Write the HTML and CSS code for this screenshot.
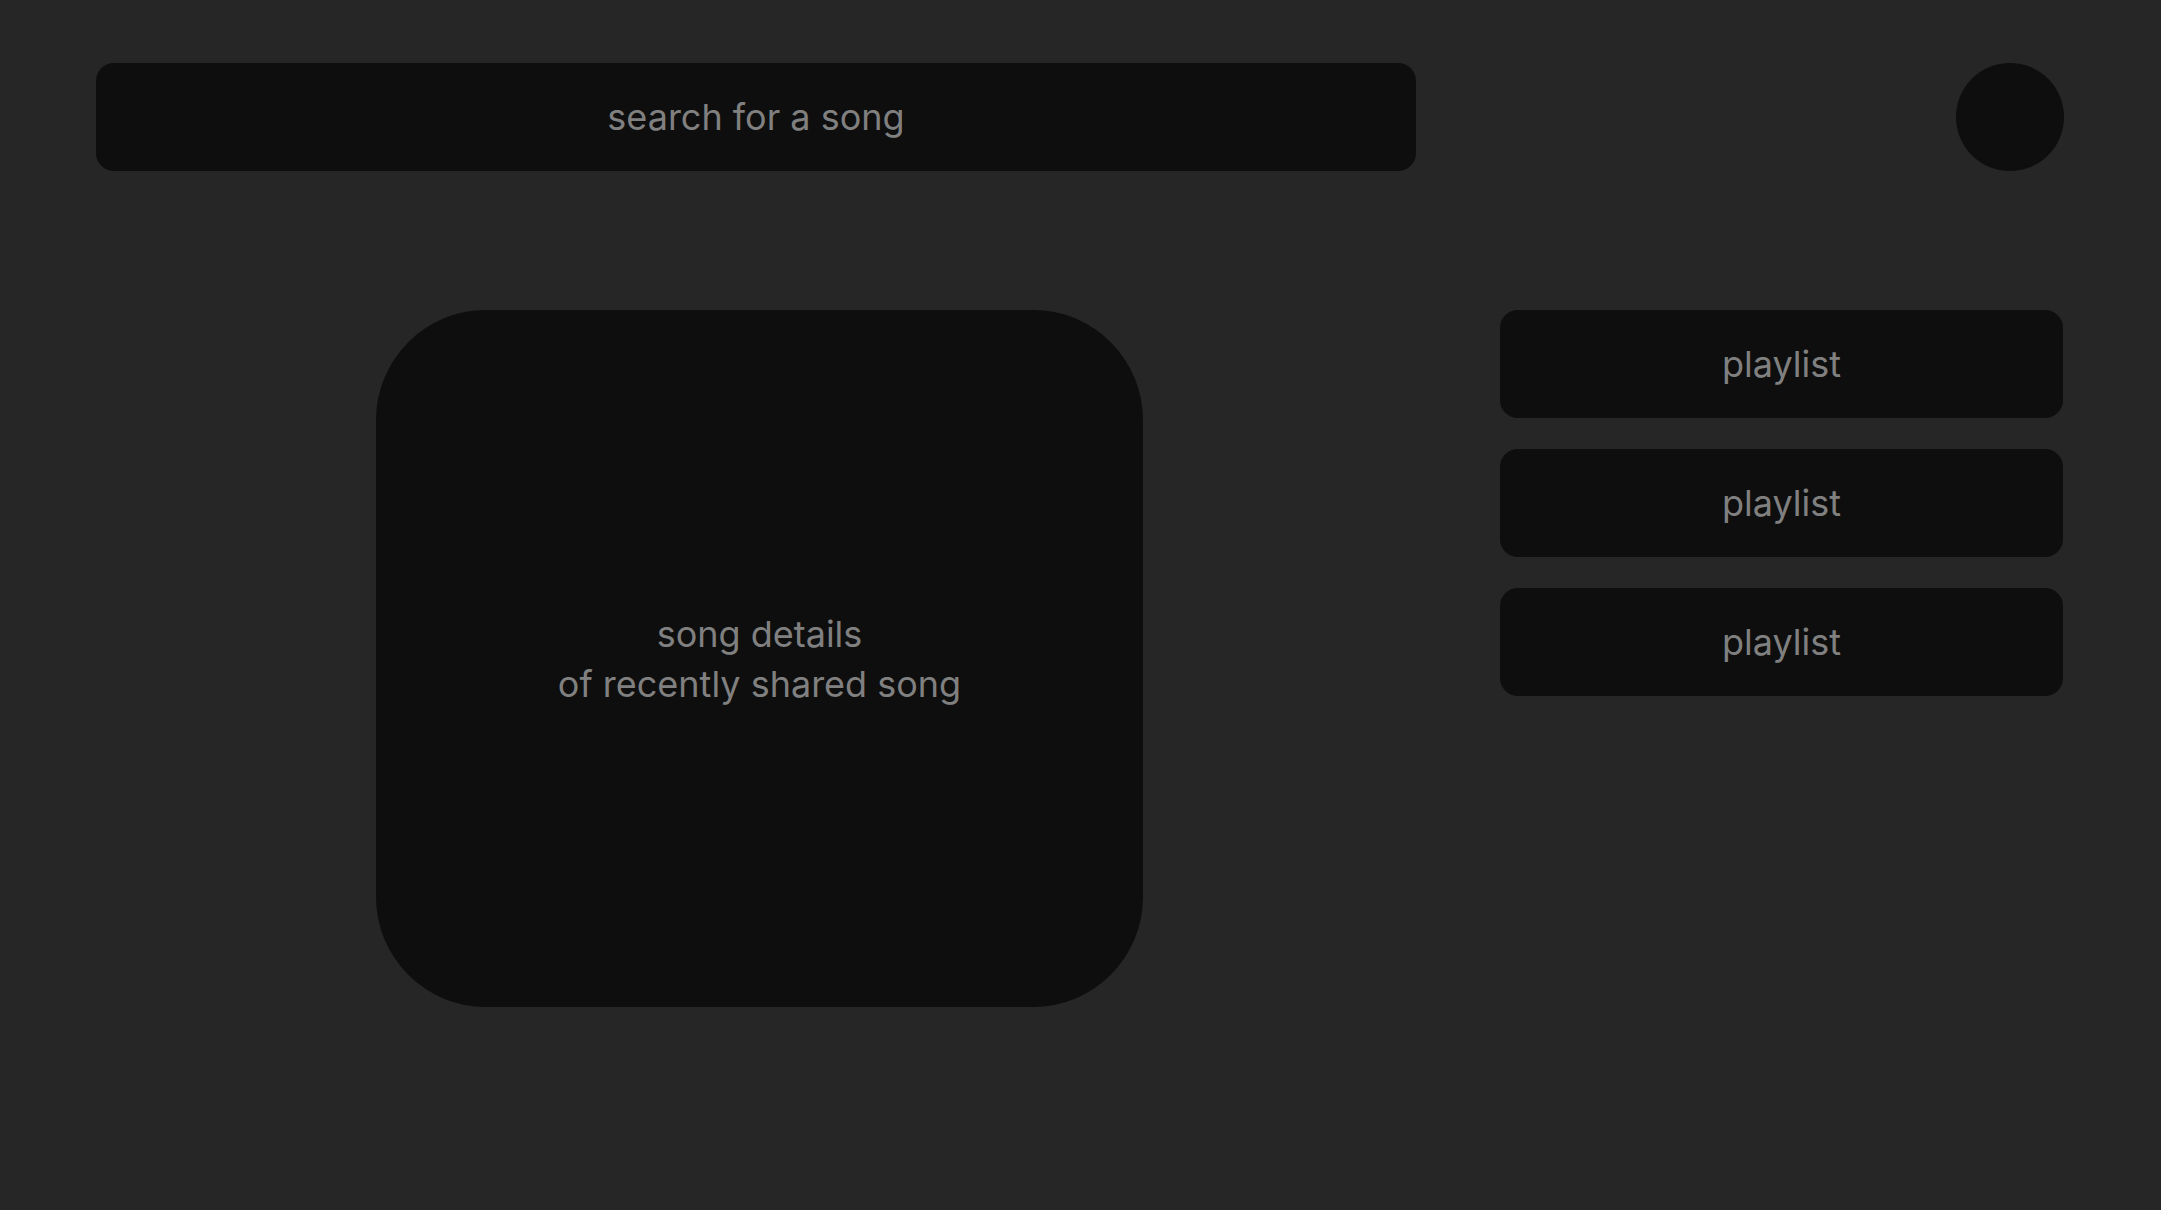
FILE: index.html
```html
<!DOCTYPE html>
<html lang="en">
<head>
<meta charset="utf-8">
<title>Songs</title>
<link rel="stylesheet" href="styles.css">
</head>
<body>
<header class="topbar">
  <div class="search">search for a song</div>
  <div class="avatar"></div>
</header>
<main class="main">
  <section class="song-card">
    <p class="song-text">song details<br>of recently shared song</p>
  </section>
  <aside class="playlists">
    <div class="playlist">playlist</div>
    <div class="playlist">playlist</div>
    <div class="playlist">playlist</div>
  </aside>
</main>
</body>
</html>
```
FILE: styles.css
```css
html, body {
  margin: 0;
  padding: 0;
}
body {
  background: #262626;
  width: 2161px;
  height: 1210px;
  font-family: Inter, "Open Sans", sans-serif;
  color: #808080;
  font-size: 36px;
}
.topbar {
  display: flex;
  justify-content: space-between;
  align-items: center;
  padding: 63px 97px 0 96px;
}
.search {
  width: 1320px;
  height: 108px;
  background: #0e0e0e;
  border-radius: 18px;
  display: flex;
  align-items: center;
  justify-content: center;
}
.avatar {
  width: 108px;
  height: 108px;
  border-radius: 50%;
  background: #0e0e0e;
}
.main {
  display: flex;
  justify-content: space-between;
  align-items: flex-start;
  padding: 0 98px 0 376px;
  margin-top: 139px;
}
.song-card {
  width: 767px;
  height: 697px;
  background: #0e0e0e;
  border-radius: 110px;
  display: flex;
  align-items: center;
  justify-content: center;
}
.song-text {
  margin: 0;
  text-align: center;
  line-height: 50px;
}
.playlists {
  width: 563px;
  display: flex;
  flex-direction: column;
  gap: 31px;
}
.playlist {
  height: 108px;
  background: #0e0e0e;
  border-radius: 18px;
  display: flex;
  align-items: center;
  justify-content: center;
}
```
